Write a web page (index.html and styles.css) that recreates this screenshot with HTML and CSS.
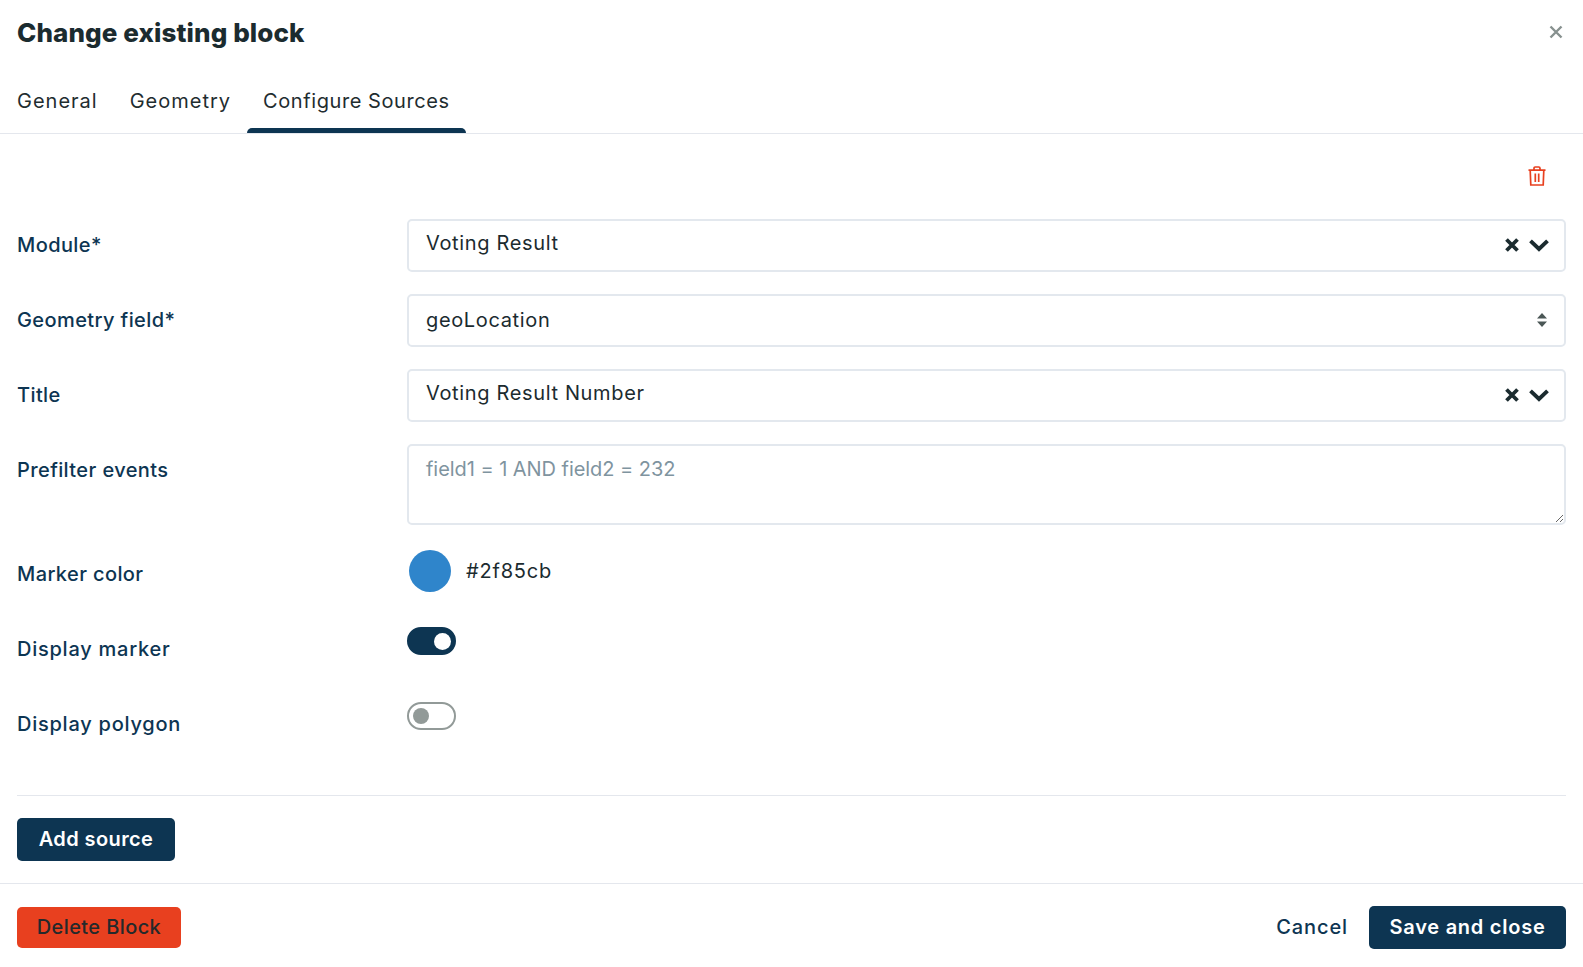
FILE: index.html
```html
<!DOCTYPE html>
<html lang="en">
<head>
<meta charset="utf-8">
<title>Change existing block</title>
<link rel="stylesheet" href="styles.css">
</head>
<body>
<div class="dialog">
  <header class="head">
    <h1 class="title">Change existing block</h1>
    <svg class="close" viewBox="0 0 14 14" width="14" height="14"><path d="M1.5 1.5l11 11M12.500 1.500l-11 11"/></svg>
  </header>
  <nav class="tabs">
    <a class="tab">General</a>
    <a class="tab">Geometry</a>
    <a class="tab active">Configure Sources</a>
  </nav>
  <main class="content">
    <div class="tools">
      <svg class="trash" viewBox="0 0 18 20" width="18" height="20"><path d="M0.500 4.200h17M2.200 4.200l.6 14.800h12.400l.6-14.800M6 4.200V2.200Q6 1 7.200 1h3.600Q12 1 12 2.200v2M7.300 7.500v8.500M10.700 7.500v8.500"/></svg>
    </div>
    <form class="form">
      <div class="row">
        <label class="label">Module*</label>
        <div class="field select lifted"><span>Voting Result</span>
          <span class="controls">
            <svg class="x" viewBox="0 0 16 16" width="16" height="16"><path d="M2.500 2.500l11 11M13.500 2.500l-11 11"/></svg>
            <svg class="chev" viewBox="0 0 22 14" width="22" height="14"><path d="M2.500 2.800L11 11l8.500-8.200"/></svg>
          </span>
        </div>
      </div>
      <div class="row">
        <label class="label">Geometry field*</label>
        <div class="field select plain"><span>geoLocation</span>
          <svg class="updown" viewBox="0 0 10 14" width="10" height="14"><path d="M5 0l5 5.500H0zM5 14l5-5.500H0z"/></svg>
        </div>
      </div>
      <div class="row">
        <label class="label">Title</label>
        <div class="field select lifted"><span>Voting Result Number</span>
          <span class="controls">
            <svg class="x" viewBox="0 0 16 16" width="16" height="16"><path d="M2.500 2.500l11 11M13.500 2.500l-11 11"/></svg>
            <svg class="chev" viewBox="0 0 22 14" width="22" height="14"><path d="M2.500 2.800L11 11l8.500-8.200"/></svg>
          </span>
        </div>
      </div>
      <div class="row tall">
        <label class="label">Prefilter events</label>
        <textarea class="area" placeholder="field1 = 1 AND field2 = 232"></textarea>
      </div>
      <div class="row">
        <label class="label">Marker color</label>
        <div class="color"><span class="swatch"></span><span class="hex">#2f85cb</span></div>
      </div>
      <div class="row">
        <label class="label wide">Display marker</label>
        <div class="switch on"><span class="knob"></span></div>
      </div>
      <div class="row">
        <label class="label wide">Display polygon</label>
        <div class="switch"><span class="knob"></span></div>
      </div>
    </form>
    <hr class="rule">
    <button class="btn add" type="button">Add source</button>
  </main>
  <footer class="foot">
    <button class="btn danger" type="button">Delete Block</button>
    <div class="actions">
      <button class="cancel" type="button">Cancel</button>
      <button class="btn save" type="button">Save and close</button>
    </div>
  </footer>
</div>
</body>
</html>
```
FILE: styles.css
```css
* { box-sizing: border-box; }
html, body { margin: 0; height: 100%; background: #fff; }
body { font-family: Inter, "Noto Sans", sans-serif; color: #1b2b2f; font-size: 20px; }
.dialog { height: 967px; display: flex; flex-direction: column; }
.head { height: 64px; padding: 0 20px 0 17px; display: flex; align-items: center; justify-content: space-between; }
.title { margin: 0; font-size: 26px; font-weight: 800; letter-spacing: 0.1px; color: #1b2b2f; }
.close { fill: none; stroke: #87918f; stroke-width: 2.4; }
.tabs { height: 70px; padding-left: 1px; display: flex; border-bottom: 1px solid #e4e7ed; }
.tab { padding: 0 16px; display: flex; align-items: center; height: 69px; padding-top: 4px; font-size: 20px; letter-spacing: 1px; color: #1f2d30; }
.tab.active { position: relative; letter-spacing: 0.58px; }
.tab.active::after { content: ""; position: absolute; left: 0; right: 0; bottom: 0; height: 5px; background: #0d3552; border-radius: 5px 5px 0 0; }
.content { flex: 1; padding: 0 17px; }
.tools { height: 85px; padding: 32px 20px 0 0; display: flex; justify-content: flex-end; align-items: flex-start; }
.trash { fill: none; stroke: #e8401f; stroke-width: 1.7; }
.form { display: flex; flex-direction: column; gap: 22px; }
.row { display: grid; grid-template-columns: 390px 1fr; height: 53px; }
.row.tall { height: 82px; }
.label { padding-top: 13px; font-size: 20px; line-height: 26px; letter-spacing: 0.4px; color: #0d3552; font-weight: 500; }
.label.wide { letter-spacing: 0.75px; }
.field { height: 53px; border: 2px solid #e3e8ee; border-radius: 5px; padding: 0 16px 0 17px; display: flex; align-items: center; justify-content: space-between; letter-spacing: 0.65px; }
.field.lifted { padding-bottom: 5px; }
.field.plain { padding-bottom: 2px; padding-right: 17px; }
.controls { display: flex; align-items: center; gap: 8px; padding-top: 3px; margin-right: -2px; }
.x { fill: none; stroke: #1b2b2f; stroke-width: 3.8; }
.chev { fill: none; stroke: #1b2b2f; stroke-width: 3.9; }
.updown { fill: #4b5756; }
.area { display: block; width: 100%; height: 81px; border: 2px solid #e3e8ee; border-radius: 5px; padding: 9px 17px; font: inherit; letter-spacing: -0.05px; line-height: 28px; color: #1b2b2f; outline: none; }
.area::placeholder { color: #7f949f; opacity: 1; }
.color { display: flex; align-items: flex-start; gap: 15px; padding: 2px 0 0 2px; }
.swatch { width: 42px; height: 42px; border-radius: 50%; background: #2f85cb; }
.hex { line-height: 42px; letter-spacing: 0.8px; }
.switch { width: 49px; height: 28px; margin-top: 4px; border: 2px solid #929a98; border-radius: 14px; display: flex; align-items: center; padding: 0 4px; }
.knob { width: 16px; height: 16px; border-radius: 50%; background: #929a98; }
.switch.on { background: #0d3552; border-color: #0d3552; justify-content: flex-end; padding: 0 3px; }
.switch.on .knob { background: #fff; width: 17px; height: 17px; }
.rule { margin: 44px 0 22px; border: 0; border-top: 1px solid #e4e7ed; }
.btn { border: 0; border-radius: 5px; background: #0d3552; color: #fff; font: 600 20px Inter, sans-serif; letter-spacing: 0.4px; height: 43px; padding: 0 0 2px; }
.add { width: 158px; display: block; }
.foot { height: 84px; flex: none; padding: 23px 17px 0; border-top: 1px solid #e4e7ed; display: flex; justify-content: space-between; align-items: flex-start; }
.danger { width: 164px; height: 41px; background: #e8401f; color: #24292b; font-weight: 500; }
.actions { display: flex; align-items: center; gap: 21px; margin-top: -1px; }
.cancel { border: 0; background: none; padding: 0 0 2px; font: 500 20px Inter, sans-serif; letter-spacing: 0.9px; color: #0d3552; }
.save { width: 197px; letter-spacing: 0.75px; }
```
